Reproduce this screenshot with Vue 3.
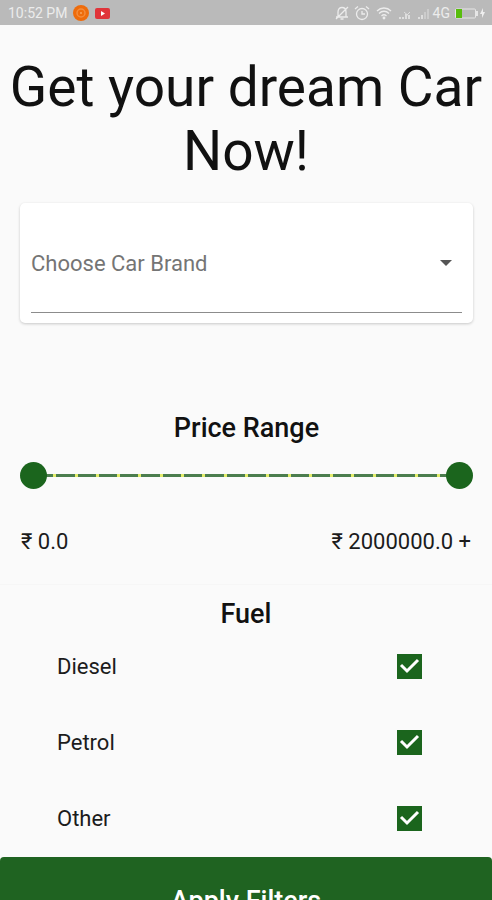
<template>
  <div class="page">
    <header class="status-bar">
      <span class="time">10:52 PM</span>
      <svg class="app-icon" viewBox="0 0 16 16" aria-hidden="true">
        <circle cx="8" cy="8" r="8" fill="#ee6c0c" />
        <circle cx="8" cy="8" r="4" fill="none" stroke="#f58d3c" stroke-width="1.5" />
        <circle cx="8" cy="8" r="1" fill="#f9a45c" />
      </svg>
      <svg class="app-icon" viewBox="0 0 16 16" aria-hidden="true">
        <rect x="0" y="3" width="15" height="11" rx="2" fill="#e0343a" />
        <path d="M6 6v5l4-2.500z" fill="#fff" />
      </svg>

      <div class="status-right">
        <svg width="14" height="16" viewBox="0 0 14 16" class="line-icon" aria-hidden="true">
          <path d="M1 12h12M3 12V7c0-3 1.500-4.500 4-4.500S11 4 11 7v5M5.500 14h3M1 14L13 2" />
        </svg>
        <svg width="16" height="16" viewBox="0 0 16 16" class="line-icon" aria-hidden="true">
          <circle cx="8" cy="9" r="5.500" />
          <path d="M8 6v3h3M1 4l3-2.500M15 4l-3-2.500" />
        </svg>
        <svg width="18" height="16" viewBox="0 0 18 16" class="line-icon" aria-hidden="true">
          <path d="M2 6c4-4 10-4 14 0M4 8.500c3-3 7-3 10 0M6.500 11c1.500-1.500 3.500-1.500 5 0" />
          <circle cx="9" cy="13" r="0.800" />
        </svg>
        <svg width="14" height="16" viewBox="0 0 14 16" class="bars" aria-hidden="true">
          <path d="M1 12h2v2H1zM4 12h2v2H4zM7 9h2v5H7zM10 10h2v4h-2z" />
          <path d="M6 7l6 5M12 7l-5 5" stroke="#dedede" />
        </svg>
        <svg width="14" height="16" viewBox="0 0 14 16" class="bars" aria-hidden="true">
          <path d="M1 12h2v2H1zM4 10h2v4H4z" />
          <path d="M7 7h2v7H7zM10 4h2v10h-2z" opacity="0.5" />
        </svg>
        <span class="network">4G</span>
        <svg width="32" height="16" viewBox="0 0 32 16" class="battery" aria-hidden="true">
          <rect x="1.500" y="4" width="20" height="9" rx="1" fill="none" stroke="#e6e6e6" />
          <rect x="2" y="4" width="6" height="9" fill="#58bd0c" />
          <rect x="22" y="6" width="2" height="5" fill="#e6e6e6" />
          <path d="M29 3l-3 6h2v4l3-6h-2z" fill="#eee" />
        </svg>
      </div>
    </header>

    <main>
      <h1 class="title">Get your dream Car Now!</h1>

      <section class="brand-card">
        <label class="brand-field">
          <select v-model="brand" class="brand-select" aria-label="Choose Car Brand">
            <option value="" disabled>Choose Car Brand</option>
            <option v-for="name in brands" :key="name" :value="name">{{ name }}</option>
          </select>
          <svg class="arrow" viewBox="0 0 12 6" aria-hidden="true">
            <path d="M0 0h12L6 6z" />
          </svg>
        </label>
      </section>

      <section class="price-section">
        <h2 class="section-title">Price Range</h2>
        <div class="slider">
          <div class="track">
            <span v-for="n in 21" :key="n" class="tick"></span>
          </div>
          <input
            v-model.number="minPrice"
            type="range"
            min="0"
            :max="limit"
            step="100000"
            aria-label="Minimum price"
          />
          <input
            v-model.number="maxPrice"
            type="range"
            min="0"
            :max="limit"
            step="100000"
            aria-label="Maximum price"
          />
        </div>
        <div class="price-values">
          <span>₹ {{ minPrice.toFixed(1) }}</span>
          <span>₹ {{ maxPrice.toFixed(1) }}{{ maxPrice === limit ? ' +' : '' }}</span>
        </div>
      </section>

      <section class="fuel-section">
        <h2 class="section-title">Fuel</h2>
        <div class="fuel-list">
          <label v-for="fuel in fuels" :key="fuel.name" class="fuel-row">
            <span>{{ fuel.name }}</span>
            <span class="check">
              <input v-model="fuel.checked" type="checkbox" />
              <svg viewBox="0 0 25 25" aria-hidden="true">
                <path d="M4 11l6 6L21 6" />
              </svg>
            </span>
          </label>
        </div>
      </section>
    </main>

    <button type="button" class="apply-btn">Apply Filters</button>
  </div>
</template>

<script setup>
import { ref } from 'vue'

const limit = 2000000

const brands = ['Maruti', 'Hyundai', 'Honda', 'Tata', 'Toyota']
const brand = ref('')
const minPrice = ref(0)
const maxPrice = ref(limit)
const fuels = ref([
  { name: 'Diesel', checked: true },
  { name: 'Petrol', checked: true },
  { name: 'Other', checked: true },
])
</script>

<style>
body {
  margin: 0;
  background: #fafafa;
}
</style>

<style scoped>
.page {
  display: flex;
  flex-direction: column;
  height: 100vh;
  overflow: hidden;
  background: #fafafa;
  color: #1c1c1c;
  font-family: Roboto, 'Noto Sans', sans-serif;
  font-size: 22px;
}

main {
  flex: none;
}

.status-bar {
  display: flex;
  flex: none;
  align-items: center;
  height: 25px;
  padding: 0 6px 0 8px;
  background: #bababa;
  color: #ececec;
  font-size: 14px;
}

.app-icon {
  width: 16px;
  height: 16px;
  margin-left: 6px;
}

.status-right {
  display: flex;
  align-items: center;
  gap: 5px;
  margin-left: auto;
}

.line-icon {
  fill: none;
  stroke: #ececec;
  stroke-width: 1.3;
}

.bars {
  fill: #dedede;
}

.network {
  margin-left: -3px;
}

.battery {
  margin-left: -1px;
}

.title {
  margin: 0;
  padding-top: 30px;
  font-size: 55px;
  font-weight: 400;
  line-height: 64px;
  text-align: center;
  color: #111;
}

.brand-card {
  margin: 20px 19px 0 20px;
  padding: 10px 11px;
  background: #fff;
  border-radius: 5px;
  box-shadow: 0 1px 3px rgba(0, 0, 0, 0.2);
}

.brand-field {
  position: relative;
  display: block;
  border-bottom: 1px solid #8c8c8c;
}

.brand-select {
  display: block;
  width: 100%;
  height: 99px;
  padding: 2px 0 0;
  border: 0;
  background: transparent;
  appearance: none;
  color: #757575;
  font-family: inherit;
  font-size: 22px;
}

.arrow {
  position: absolute;
  top: 47px;
  right: 10px;
  width: 12px;
  height: 6px;
  fill: #555;
  pointer-events: none;
}

.section-title {
  margin: 0;
  font-size: 27px;
  font-weight: 500;
  line-height: 32px;
  text-align: center;
  color: #111;
}

.price-section {
  padding: 89px 19px 28px 20px;
  border-bottom: 1px solid #f6f6f6;
}

.slider {
  position: relative;
  display: flex;
  align-items: center;
  height: 27px;
  margin-top: 18px;
}

.track {
  display: flex;
  flex: 1;
  justify-content: space-between;
  height: 3px;
  margin: 0 12px;
  background: #4b7d4e;
}

.tick {
  width: 3px;
  background: #e2ec6a;
}

.slider input {
  position: absolute;
  inset: 0;
  width: 100%;
  height: 27px;
  margin: 0;
  background: transparent;
  appearance: none;
  pointer-events: none;
}

.slider input::-webkit-slider-thumb {
  width: 27px;
  height: 27px;
  border-radius: 50%;
  background: #1b651d;
  appearance: none;
  pointer-events: auto;
}

.price-values {
  display: flex;
  justify-content: space-between;
  padding: 39px 2px 0 1px;
  line-height: 28px;
}

.fuel-section {
  padding: 13px 0 25px;
}

.fuel-list {
  display: grid;
  gap: 48px;
  margin-top: 22px;
}

.fuel-row {
  display: flex;
  align-items: center;
  justify-content: space-between;
  height: 28px;
  padding: 0 70px 0 57px;
}

.check {
  display: grid;
  width: 25px;
  height: 25px;
}

.check input,
.check svg {
  grid-area: 1 / 1;
  width: 25px;
  height: 25px;
  margin: 0;
}

.check input {
  border: 2px solid #1b651d;
  appearance: none;
}

.check input:checked {
  background: #1b651d;
}

.check svg {
  fill: none;
  stroke: #fff;
  stroke-width: 3;
  pointer-events: none;
}

.check input:not(:checked) + svg {
  display: none;
}

.apply-btn {
  flex: none;
  height: 88px;
  padding: 0;
  border: 0;
  border-radius: 4px;
  background: #1f6321;
  color: #fff;
  font-family: inherit;
  font-size: 27px;
  font-weight: 500;
  cursor: pointer;
}
</style>
